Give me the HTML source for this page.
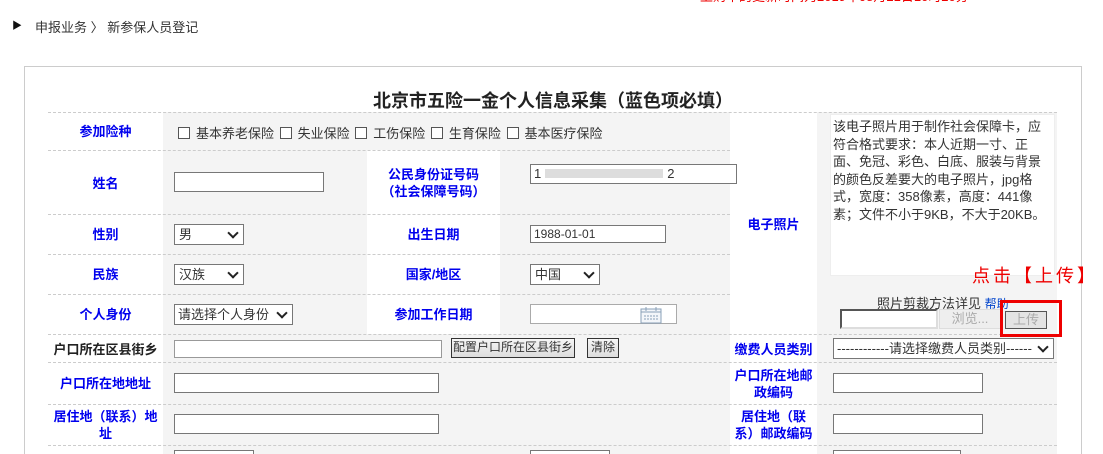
<!DOCTYPE html>
<html style="width:1103px;height:454px;overflow:hidden"><head><meta charset="utf-8"><style>
*{margin:0;padding:0;box-sizing:border-box}
body{width:1103px;height:454px;overflow:hidden;background:#fff;position:relative;font-family:"Liberation Sans","Noto Sans CJK SC",sans-serif;font-size:13px;color:#333}
.a{position:absolute;white-space:nowrap}
.g{position:absolute;background:#f4f4f4}
.d{position:absolute;left:48px;width:1009px;border-top:1px dashed #ccc;height:0}
.l{position:absolute;color:#0000ee;font-weight:bold;text-align:center;font-size:13px;line-height:17px}
.k{color:#222}
.in{position:absolute;background:#fff;border:1px solid #777;height:20px}
.sel{position:absolute;background:#fff;border:1px solid #777;height:21px;font-size:13px;line-height:19px;padding-left:4px;color:#333;overflow:hidden}
.sel:after{content:"";position:absolute;right:6px;top:4px;width:6px;height:6px;border-right:2px solid #222;border-bottom:2px solid #222;transform:rotate(45deg)}
.btn{position:absolute;border:1px solid #333;background:linear-gradient(#f6f6f6,#ddd);font-size:12px;line-height:17px;height:20px;text-align:center;color:#333;white-space:nowrap;overflow:hidden}
.cb{display:inline-block;width:12px;height:12px;border:1px solid #555;vertical-align:-1px;margin-right:6px;background:#fff}
</style></head><body>
<div class="a" style="left:700px;top:-14px;color:#e00;font-size:13px">上购本的更新时间为2019年08月21日10时20分</div>
<div class="a" style="left:12px;top:17px;font-size:10px;color:#111">▶</div>
<div class="a" style="left:35px;top:17px;color:#333">申报业务 〉 新参保人员登记</div>
<div style="position:absolute;left:24px;top:66px;width:1058px;height:388px;border:1px solid #ccc;border-bottom:none"></div>
<div class="a" style="left:373px;top:87px;font-size:18px;font-weight:bold;color:#222">北京市五险一金个人信息采集（蓝色项必填）</div>

<div class="g" style="left:163px;top:112px;width:567px;height:222px"></div>
<div style="position:absolute;left:367px;top:150px;width:133px;height:184px;background:#fff"></div>
<div class="g" style="left:817px;top:112px;width:240px;height:342px"></div>
<div class="g" style="left:163px;top:334px;width:567px;height:120px"></div>

<div class="d" style="top:112px"></div>
<div class="d" style="top:150px;width:682px"></div>
<div class="d" style="top:214px;width:682px"></div>
<div class="d" style="top:254px;width:682px"></div>
<div class="d" style="top:294px;width:682px"></div>
<div class="d" style="top:334px"></div>
<div class="d" style="top:362px"></div>
<div class="d" style="top:404px"></div>
<div class="d" style="top:445px"></div>

<div class="l" style="left:48px;width:115px;top:123px">参加险种</div>
<div class="a" style="left:178px;top:123px"><span class="cb"></span>基本养老保险 <span class="cb" style="margin-left:2px"></span>失业保险 <span class="cb" style="margin-left:2px"></span>工伤保险 <span class="cb" style="margin-left:2px"></span>生育保险 <span class="cb" style="margin-left:2px"></span>基本医疗保险</div>

<div style="position:absolute;left:830px;top:114px;width:225px;height:162px;background:#fff;border:1px solid #eee;padding:3px 2px;font-size:13px;line-height:17.5px;white-space:normal;color:#333">该电子照片用于制作社会保障卡，应符合格式要求：本人近期一寸、正面、免冠、彩色、白底、服装与背景的颜色反差要大的电子照片，jpg格式，宽度：358像素，高度：441像素；文件不小于9KB，不大于20KB。</div>
<div class="l" style="left:730px;width:87px;top:216px">电子照片</div>

<div class="l" style="left:48px;width:115px;top:175px">姓名</div>
<div class="in" style="left:174px;top:172px;width:150px"></div>
<div class="l" style="left:367px;width:133px;top:166px">公民身份证号码<br>（社会保障号码）</div>
<div class="in" style="left:530px;top:164px;width:207px;padding-left:3px;line-height:18px">1<span style="display:inline-block;width:118px;height:9px;background:#ddd;margin:0 4px"></span>2</div>

<div class="l" style="left:48px;width:115px;top:226px">性别</div>
<div class="sel" style="left:174px;top:224px;width:70px">男</div>
<div class="l" style="left:367px;width:133px;top:226px">出生日期</div>
<div class="in" style="left:530px;top:225px;width:136px;height:18px;font-size:12px;line-height:16px;padding-left:3px">1988-01-01</div>

<div class="l" style="left:48px;width:115px;top:266px">民族</div>
<div class="sel" style="left:174px;top:264px;width:70px">汉族</div>
<div class="l" style="left:367px;width:133px;top:266px">国家/地区</div>
<div class="sel" style="left:530px;top:264px;width:70px">中国</div>

<div class="l" style="left:48px;width:115px;top:306px">个人身份</div>
<div class="sel" style="left:174px;top:304px;width:119px;padding-left:3px">请选择个人身份</div>
<div class="l" style="left:367px;width:133px;top:306px">参加工作日期</div>
<div class="in" style="left:530px;top:304px;width:147px;border-color:#aaa"></div>
<svg class="a" style="left:640px;top:306px" width="22" height="18"><rect x="1" y="3" width="20" height="14" fill="#f3f6fa" stroke="#8aa0b8"/><line x1="1" y1="6" x2="21" y2="6" stroke="#8aa0b8"/><line x1="6" y1="1" x2="6" y2="5" stroke="#8aa0b8"/><line x1="16" y1="1" x2="16" y2="5" stroke="#8aa0b8"/><path d="M4 10h14M4 13h14" stroke="#8aa0b8" stroke-dasharray="2 1"/></svg>

<div class="a" style="left:877px;top:293px;font-size:13px">照片剪裁方法详见 <span style="color:#0044cc;font-size:12px">帮助</span></div>
<div class="in" style="left:840px;top:309px;width:98px;height:20px;border:2px solid #555;border-right-color:#ddd;border-bottom-color:#ddd"></div>
<div class="a" style="left:939px;top:309px;width:62px;height:20px;background:#eee;border:1px solid #ddd;color:#aaa;text-align:center;line-height:18px">浏览...</div>
<div class="a" style="left:1005px;top:311px;width:42px;height:18px;background:#e4e4e4;border:1px solid #555;color:#aaa;text-align:center;line-height:16px">上传</div>
<div class="a" style="left:1000px;top:300px;width:62px;height:37px;border:3px solid #e00"></div>
<div class="a" style="left:972px;top:262px;font-size:18px;color:#e00;letter-spacing:3px">点击【上传】</div>

<div class="l k" style="left:48px;width:115px;top:341px">户口所在区县街乡</div>
<div class="in" style="left:174px;top:340px;width:268px;height:18px;border-color:#999"></div>
<div class="btn" style="left:451px;top:338px;width:124px">配置户口所在区县街乡</div>
<div class="btn" style="left:587px;top:338px;width:32px">清除</div>
<div class="l" style="left:730px;width:87px;top:341px">缴费人员类别</div>
<div class="sel" style="left:833px;top:338px;width:221px;padding-left:3px">------------请选择缴费人员类别------</div>

<div class="l" style="left:48px;width:115px;top:375px">户口所在地地址</div>
<div class="in" style="left:174px;top:373px;width:265px"></div>
<div class="l" style="left:730px;width:87px;top:367px">户口所在地邮<br>政编码</div>
<div class="in" style="left:833px;top:373px;width:150px"></div>

<div class="l" style="left:48px;width:115px;top:408px">居住地（联系）地<br>址</div>
<div class="in" style="left:174px;top:414px;width:265px"></div>
<div class="l" style="left:730px;width:87px;top:408px">居住地（联<br>系）邮政编码</div>
<div class="in" style="left:833px;top:414px;width:150px"></div>

<div class="in" style="left:174px;top:450px;width:80px;height:4px;border-bottom:none"></div>
<div class="in" style="left:530px;top:450px;width:80px;height:4px;border-bottom:none"></div>
<div class="in" style="left:833px;top:450px;width:128px;height:4px;border-bottom:none"></div>
</body></html>
